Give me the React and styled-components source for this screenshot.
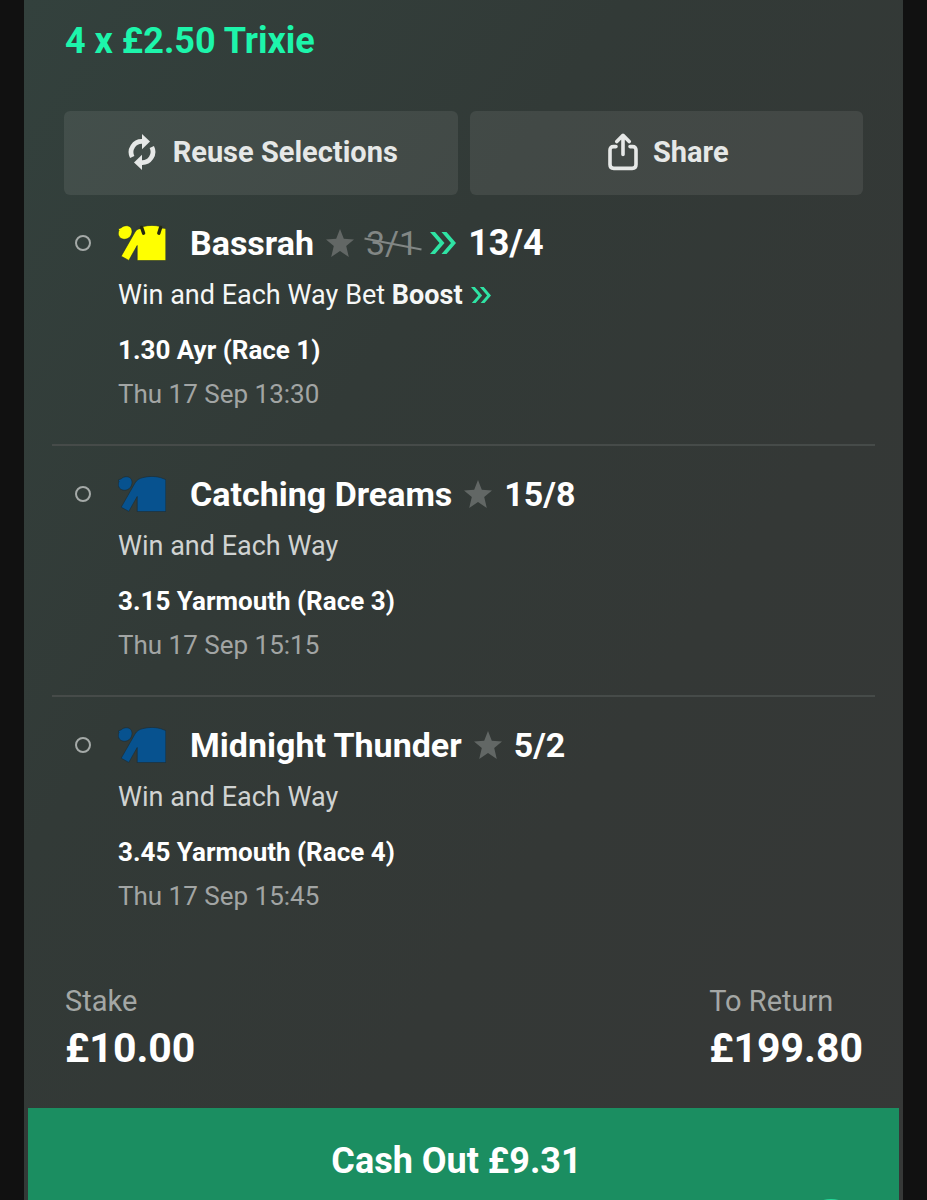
import React from 'react';
import styled, { createGlobalStyle } from 'styled-components';

const GlobalStyle = createGlobalStyle`
  * {
    box-sizing: border-box;
  }
  body {
    margin: 0;
    background: #111111;
    color: #ffffff;
    font-family: Roboto, 'Liberation Sans', sans-serif;
  }
`

const Slip = styled.main`
  display: flex;
  flex-direction: column;
  min-height: 100vh;
  margin: 0 24px;
  background: linear-gradient(125deg, #33413d 0%, #323a37 35%, #343836 65%, #363837 100%);
`

const Title = styled.h1`
  margin: 0;
  padding: 16px 41px 45px;
  color: #1df5ab;
  font-size: 36px;
  font-weight: 700;
  line-height: 50px;
`

const Actions = styled.div`
  display: grid;
  grid-template-columns: 1fr 1fr;
  gap: 12px;
  padding: 0 40px;
`

const ActionButton = styled.button`
  display: flex;
  align-items: center;
  justify-content: center;
  gap: ${props => props.$gap};
  height: 84px;
  padding: 0 0 2px 4px;
  border: 0;
  border-radius: 6px;
  background: rgba(255, 255, 255, 0.08);
  color: #e6e8e7;
  font: 700 29px Roboto, 'Liberation Sans', sans-serif;
`

const Selections = styled.ul`
  margin: 0;
  padding: 0 28px;
  list-style: none;
`

const Selection = styled.li`
  padding: 25px 0 33px 66px;
  & + & {
    border-top: 2px solid #464b49;
  }
`

const NameRow = styled.div`
  display: flex;
  align-items: center;
  height: 46px;
  margin-left: -43px;
`

const Status = styled.span`
  width: 16px;
  height: 16px;
  margin-right: 27px;
  border: 2px solid #a5aaa8;
  border-radius: 50%;
`

const Name = styled.h2`
  margin: 0 12px 0 24px;
  font-size: 34px;
  font-weight: 700;
  line-height: 44px;
`

const Odds = styled.span`
  margin-left: 12px;
  font-size: ${props => (props.$boosted ? '36px' : '34px')};
  font-weight: 700;
  line-height: 44px;
`

const OldOdds = styled.del`
  position: relative;
  margin: 0 12px;
  color: #828785;
  font-size: 34px;
  line-height: 44px;
  text-decoration: none;
  &::after {
    content: '';
    position: absolute;
    top: 22px;
    left: -2px;
    right: -4px;
    height: 2px;
    background: #828785;
    transform: rotate(11deg);
  }
`

const Market = styled.p`
  display: flex;
  align-items: center;
  margin: 0;
  color: ${props => (props.$boosted ? '#f5f7f6' : '#d0d3d2')};
  font-size: 27px;
  line-height: 58px;
`

const Boost = styled.span`
  display: flex;
  align-items: center;
  gap: 8px;
  margin-left: 7px;
`

const Race = styled.p`
  margin: 0;
  font-size: 26px;
  font-weight: 700;
  line-height: 53px;
`

const Time = styled.p`
  margin: 0;
  color: #a2a5a4;
  font-size: 26px;
  line-height: 34px;
`

const Totals = styled.dl`
  display: flex;
  justify-content: space-between;
  margin: 0;
  padding: 33px 40px 35px 41px;
`

const Total = styled.div`
  dt {
    color: #a4a7a5;
    font-size: 29px;
    line-height: 44px;
  }
  dd {
    margin: 0;
    font-size: 41px;
    font-weight: 700;
    line-height: 50px;
  }
`

const Footer = styled.footer`
  position: relative;
  display: flex;
  flex: 1;
  padding: 0 4px;
  overflow: hidden;
  &::after {
    content: '';
    position: absolute;
    top: 91px;
    right: 42px;
    width: 60px;
    height: 60px;
    border-radius: 50%;
    background: #27d99a;
  }
`

const CashOut = styled.button`
  flex: 1;
  padding: 30px 14px 16px 0;
  border: 0;
  background: #1b8e61;
  color: #ffffff;
  font: 700 36px/46px Roboto, 'Liberation Sans', sans-serif;
`

const ReuseIcon = () => (
  <svg width="28" height="36" viewBox="0 0 28 36" fill="none" aria-hidden="true">
    <path d="M4.2 23A10.8 10.8 0 0 1 14.5 7.4" stroke="currentColor" strokeWidth="4.8" />
    <path d="M14 0L22 7.6L14 15.2Z" fill="currentColor" />
    <path d="M23.8 13A10.8 10.8 0 0 1 13.5 28.6" stroke="currentColor" strokeWidth="4.8" />
    <path d="M14 36L6 28.4L14 20.8Z" fill="currentColor" />
  </svg>
)

const ShareIcon = () => (
  <svg
    width="30"
    height="38"
    viewBox="0 0 30 38"
    fill="none"
    stroke="currentColor"
    strokeWidth="3.6"
    strokeLinecap="round"
    strokeLinejoin="round"
    aria-hidden="true"
  >
    <path d="M8 13.6H5.5C3.2 13.6 2 14.8 2 17V31.5C2 34 3.2 35.4 5.8 35.4H24.2C26.8 35.4 28 34 28 31.5V17C28 14.8 26.8 13.6 24.5 13.6H22" />
    <path d="M15 21.5V2.5M8.8 8.5L15 2.3L21.2 8.5" />
  </svg>
)

const Star = () => (
  <svg width="28" height="28" viewBox="0 0 28 28" aria-hidden="true">
    <path d="M14 0L17.8 9.7L28 10.4L20.2 17L22.8 28L14 22L5.2 28L7.8 17L0 10.4L10.2 9.7Z" fill="#626765" />
  </svg>
)

const Chevrons = ({ size }) => (
  <svg width={size} height={size * 22 / 26} viewBox="0 0 26 22" fill="#2fe3a4" aria-hidden="true">
    <path d="M0 0H5L14.5 11L5 22H0L9.5 11Z" />
    <path d="M11.5 0H16.5L26 11L16.5 22H11.5L21 11Z" />
  </svg>
)

const Silks = ({ color, marks }) => (
  <svg width="48" height="36" viewBox="0 0 48 36" aria-hidden="true">
    <g fill={color} stroke="#1d2b31" strokeWidth="0.6">
      <path d="M0.2 4L3.2 2.8C6 0 10.6 0 12.8 2.6C15 5.4 14.2 10 11.2 12.6C7.8 15.4 2.6 14.6 .8 11C0 9 .1 7 1 5.4Z" />
      <path d="M19.2 35.6V20.5L10.8 35.4L3.2 31.2L17 7C18.8 4 21.2 2.4 25 1.6C31 0 37 0 42.5 1.6L47.8 3.6V35.6Z" />
    </g>
    {marks && (
      <>
        <path d="M19 0H22.8L24 3.4L18 5Z" fill="#323b38" />
        <path d="M41 0H48V3.6H43Z" fill="#323b38" />
        <path d="M23.6 2.4L25.6 8.2M42.6 2.4L40.8 8.2" stroke="#252910" strokeWidth="3.4" strokeLinecap="round" />
      </>
    )}
  </svg>
)

const selections = [
  {
    name: 'Bassrah',
    oldOdds: '3/1',
    odds: '13/4',
    race: '1.30 Ayr (Race 1)',
    time: 'Thu 17 Sep 13:30',
    color: '#ffff00',
  },
  {
    name: 'Catching Dreams',
    odds: '15/8',
    race: '3.15 Yarmouth (Race 3)',
    time: 'Thu 17 Sep 15:15',
    color: '#07528f',
  },
  {
    name: 'Midnight Thunder',
    odds: '5/2',
    race: '3.45 Yarmouth (Race 4)',
    time: 'Thu 17 Sep 15:45',
    color: '#07528f',
  },
]

const App = () => {
  return (
    <>
      <GlobalStyle />
      <Slip>
        <Title>4 x £2.50 Trixie</Title>
        <Actions>
          <ActionButton type="button" $gap="17px"><ReuseIcon />Reuse Selections</ActionButton>
          <ActionButton type="button" $gap="15px"><ShareIcon />Share</ActionButton>
        </Actions>
        <Selections>
          {selections.map(({ name, oldOdds, odds, race, time, color }) => (
            <Selection key={name}>
              <NameRow>
                <Status />
                <Silks color={color} marks={Boolean(oldOdds)} />
                <Name>{name}</Name>
                <Star />
                {oldOdds && <OldOdds>{oldOdds}</OldOdds>}
                {oldOdds && <Chevrons size={26} />}
                <Odds $boosted={Boolean(oldOdds)}>{odds}</Odds>
              </NameRow>
              <Market $boosted={Boolean(oldOdds)}>
                Win and Each Way
                {oldOdds && <Boost><span>Bet <b>Boost</b></span><Chevrons size={20} /></Boost>}
              </Market>
              <Race>{race}</Race>
              <Time>{time}</Time>
            </Selection>
          ))}
        </Selections>
        <Totals>
          <Total><dt>Stake</dt><dd>£10.00</dd></Total>
          <Total><dt>To Return</dt><dd>£199.80</dd></Total>
        </Totals>
        <Footer>
          <CashOut type="button">Cash Out £9.31</CashOut>
        </Footer>
      </Slip>
    </>
  );
}

export default App;
